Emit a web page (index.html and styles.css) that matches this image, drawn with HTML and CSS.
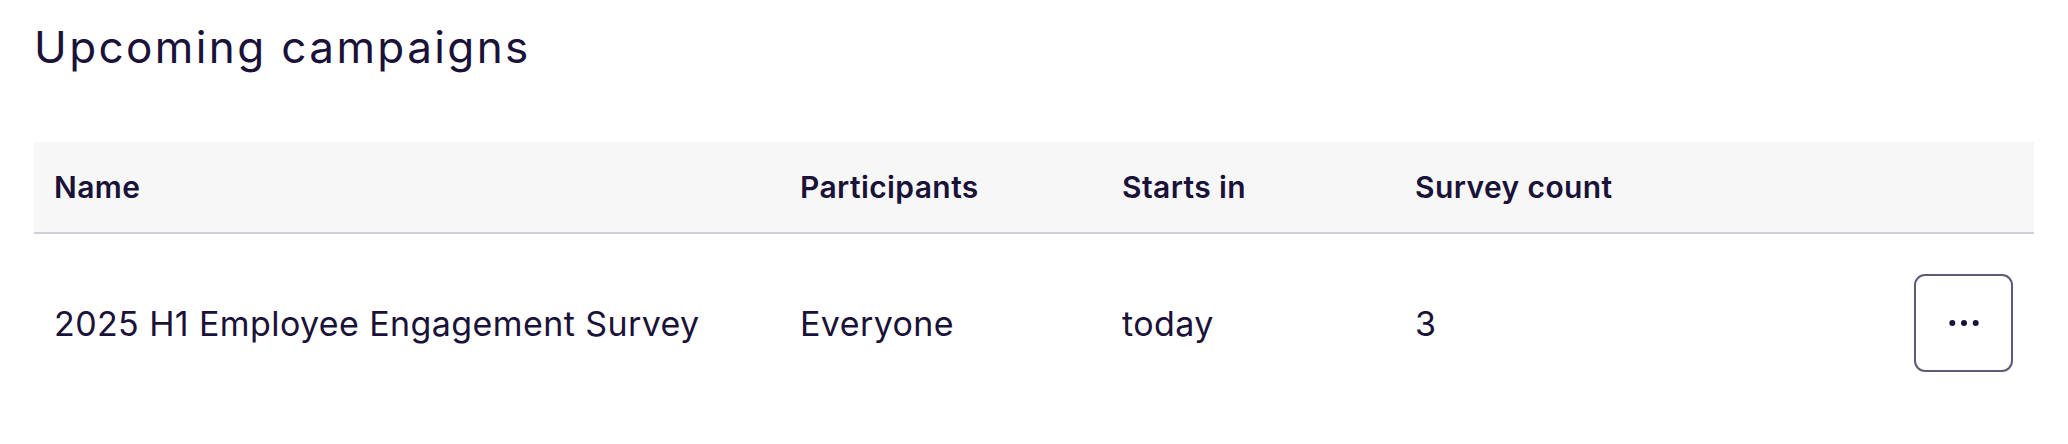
FILE: index.html
```html
<!DOCTYPE html>
<html lang="en">
<head>
<meta charset="utf-8">
<title>Upcoming campaigns</title>
<link rel="stylesheet" href="styles.css">
</head>
<body>
<main class="page">
  <h1 class="title">Upcoming campaigns</h1>
  <div class="table" role="table">
    <div class="row head" role="row">
      <div class="cell" role="columnheader">Name</div>
      <div class="cell" role="columnheader">Participants</div>
      <div class="cell" role="columnheader">Starts in</div>
      <div class="cell" role="columnheader">Survey count</div>
      <div class="cell action" role="columnheader"></div>
    </div>
    <div class="row body" role="row">
      <div class="cell" role="cell">2025 H1 Employee Engagement Survey</div>
      <div class="cell" role="cell">Everyone</div>
      <div class="cell" role="cell">today</div>
      <div class="cell" role="cell">3</div>
      <div class="cell action" role="cell">
        <button class="more" type="button" aria-label="More actions">
          <svg width="30" height="8" viewBox="0 0 30 8" aria-hidden="true">
            <circle cx="3.3" cy="4" r="3" fill="#1a1238"/>
            <circle cx="15" cy="4" r="3" fill="#1a1238"/>
            <circle cx="26.7" cy="4" r="3" fill="#1a1238"/>
          </svg>
        </button>
      </div>
    </div>
  </div>
</main>
</body>
</html>
```

FILE: styles.css
```css
* { box-sizing: border-box; }
html, body { margin: 0; padding: 0; background: #ffffff; }
body {
  font-family: Inter, "Noto Sans", "Liberation Sans", sans-serif;
  color: #1a1238;
}
.page {
  padding: 17px 34px 0 34px;
}
.title {
  margin: 0 0 65px 0;
  font-size: 44px;
  line-height: 60px;
  font-weight: 400;
  letter-spacing: 2.4px;
}
.table {
  width: 100%;
}
.row {
  display: grid;
  grid-template-columns: 746px 322px 293px 1fr auto;
  align-items: center;
}
.row.head {
  height: 92px;
  background: #f7f7f7;
  border-bottom: 2px solid #d0cfd6;
  font-size: 30px;
  font-weight: 600;
  letter-spacing: 0.4px;
}
.row.body {
  padding: 40px 0;
  font-size: 34px;
  font-weight: 400;
  letter-spacing: 0.4px;
}
.cell {
  padding-left: 20px;
}
.cell.action {
  padding: 0 21px 0 0;
}
.more {
  width: 99px;
  height: 98px;
  border: 2px solid #5f5a7a;
  border-radius: 11px;
  background: #ffffff;
  display: flex;
  align-items: center;
  justify-content: center;
  padding: 0;
  cursor: pointer;
}
```
